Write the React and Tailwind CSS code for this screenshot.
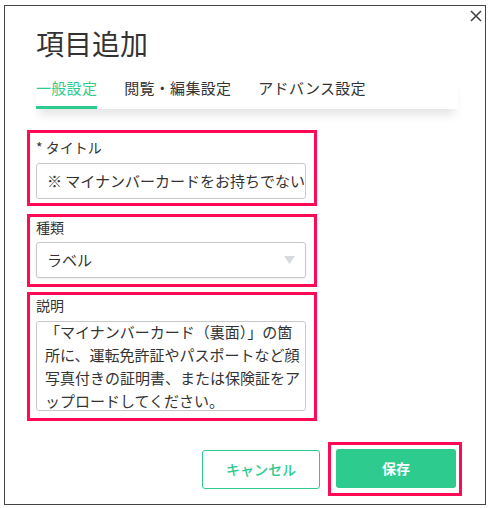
import React, { useState } from "react";

const FONT = { fontFamily: '"Noto Sans CJK JP", "Noto Sans", sans-serif' };

const TABS = ["一般設定", "閲覧・編集設定", "アドバンス設定"];

const DESC_LINES = [
  "「マイナンバーカード（裏面）」の箇",
  "所に、運転免許証やパスポートなど顔",
  "写真付きの証明書、または保険証をア",
  "ップロードしてください。",
];

export default function App() {
  const [tab, setTab] = useState(0);

  return (
    <div className="w-[491px] h-[508px] bg-white overflow-hidden" style={FONT}>
      <div className="relative ml-[4px] mt-[5px] w-[482px] h-[500px] border border-[#444] bg-white">
        {/* close */}
        <button className="absolute right-[3px] top-[4px] w-[12px] h-[12px] text-[#444]">
          <svg width="12" height="12" viewBox="0 0 12 12" fill="none">
            <path d="M1 1L11 11M11 1L1 11" stroke="currentColor" strokeWidth="1.6" />
          </svg>
        </button>

        <div className="pt-[17px] pl-[22px]">
          <h1 className="ml-[9px] text-[28px] leading-[40px] text-[#333] font-normal">項目追加</h1>

          {/* tabs */}
          <div className="ml-[9px] mt-[14px] w-[422px] flex gap-[27px] bg-white shadow-[0_9px_10px_-3px_rgba(0,0,0,0.10)]">
            {TABS.map((t, i) => (
              <button
                key={t}
                onClick={() => setTab(i)}
                className={
                  i === tab
                    ? "text-[15px] leading-[22px] pb-[7px] border-b-[3px] border-[#2dcb8e] text-[#2dcb8e] tracking-[0.3px]"
                    : "text-[15px] leading-[22px] pb-[7px] border-b-[3px] border-transparent text-[#333] tracking-[0.3px]"
                }
              >
                {t}
              </button>
            ))}
          </div>

          {/* title */}
          <div className="mt-[21px] w-[290px] border-[3px] border-[#ff0a55] pl-[6px] pr-[8px] pt-[4px] pb-[4px]">
            <div className="text-[14px] leading-[20px] text-[#333] mb-[6px]">* タイトル</div>
            <div className="h-[36px] border border-[#c8c8c8] rounded-[3px] pl-[10px] flex items-center overflow-hidden whitespace-nowrap text-[15px] text-[#333]">
              ※ マイナンバーカードをお持ちでない
            </div>
          </div>

          {/* type */}
          <div className="mt-[8px] w-[290px] border-[3px] border-[#ff0a55] pl-[6px] pr-[8px] pb-[6px]">
            <div className="text-[14px] leading-[20px] text-[#333] mb-[5px]">種類</div>
            <div className="h-[36px] border border-[#c8c8c8] rounded-[3px] pl-[10px] pr-[10px] flex items-center justify-between text-[15px] text-[#333] shadow-[0_1px_2px_rgba(0,0,0,0.08)]">
              <span>ラベル</span>
              <svg width="11" height="8" viewBox="0 0 11 8">
                <path d="M0 0H11L5.5 8Z" fill="#d6dae1" />
              </svg>
            </div>
          </div>

          {/* description */}
          <div className="mt-[5px] w-[290px] border-[3px] border-[#ff0a55] pl-[6px] pr-[8px] pb-[7px]">
            <div className="text-[14px] leading-[20px] text-[#333] mb-[6px]">説明</div>
            <div className="h-[90px] border border-[#c8c8c8] rounded-[3px] pl-[8px] overflow-hidden text-[15px] leading-[23px] text-[#333] whitespace-nowrap">
              <div className="-mt-[2px]">
                {DESC_LINES.map((l) => (
                  <div key={l}>{l}</div>
                ))}
              </div>
            </div>
          </div>
        </div>

        {/* footer */}
        <div className="mt-[21px] flex justify-end items-center gap-[8px] pr-[23px]">
          <button className="w-[118px] h-[39px] border border-[#2dcb8e] rounded-[3px] text-[14px] font-medium text-[#2dcb8e] bg-white">
            キャンセル
          </button>
          <div className="w-[134px] h-[54px] border-[3px] border-[#ff0a55] pl-[5px] pt-[4px]">
            <button className="w-[120px] h-[39px] rounded-[3px] bg-[#2dcb8e] text-white text-[14px] font-bold">
              保存
            </button>
          </div>
        </div>
      </div>
    </div>
  );
}
